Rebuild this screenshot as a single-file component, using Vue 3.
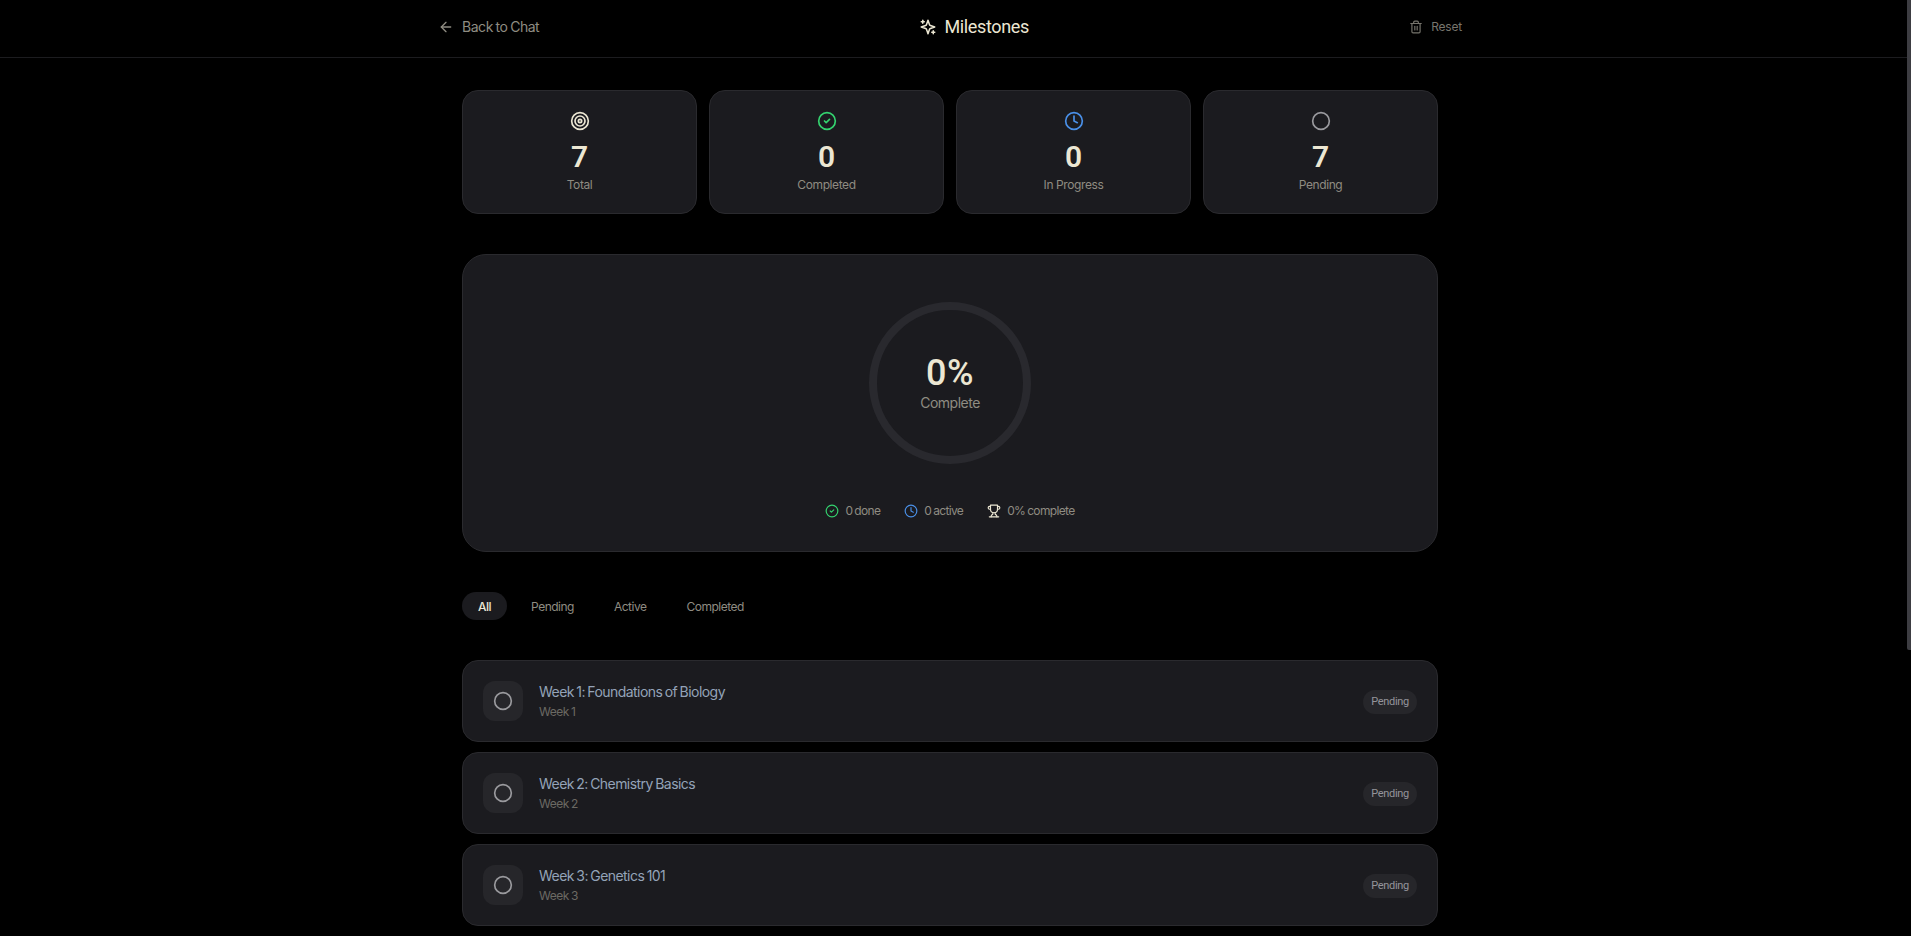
<template>
  <div class="page">
    <header class="topbar">
      <div class="topbar-inner">
        <button class="back">
          <svg class="icon-16" viewBox="0 0 24 24"><path d="m12 19-7-7 7-7" /><path d="M19 12H5" /></svg>
          <span>Back to Chat</span>
        </button>
        <h1 class="title">
          <svg class="icon-18" viewBox="0 0 24 24">
            <path d="m12 3-1.9 5.8a2 2 0 0 1-1.3 1.3L3 12l5.8 1.9a2 2 0 0 1 1.3 1.3L12 21l1.9-5.8a2 2 0 0 1 1.3-1.3L21 12l-5.8-1.9a2 2 0 0 1-1.3-1.3Z" />
            <path d="M5 3v4" /><path d="M3 5h4" /><path d="M19 17v4" /><path d="M17 19h4" />
          </svg>
          <span>Milestones</span>
        </h1>
        <button class="reset">
          <svg class="icon-14" viewBox="0 0 24 24">
            <path d="M3 6h18" /><path d="M19 6v14a2 2 0 0 1-2 2H7a2 2 0 0 1-2-2V6" />
            <path d="M8 6V4a2 2 0 0 1 2-2h4a2 2 0 0 1 2 2v2" /><path d="M10 11v6" /><path d="M14 11v6" />
          </svg>
          <span>Reset</span>
        </button>
      </div>
    </header>

    <div class="body-wrap">
      <main class="content">
        <section class="stats">
          <div v-for="s in stats" :key="s.label" class="stat">
            <svg class="stat-icon" :class="s.kind" viewBox="0 0 24 24">
              <template v-if="s.kind === 'target'">
                <circle cx="12" cy="12" r="10" /><circle cx="12" cy="12" r="6" /><circle cx="12" cy="12" r="2" />
              </template>
              <template v-else-if="s.kind === 'done'">
                <circle cx="12" cy="12" r="10" /><path d="m9 12 2 2 4-4" />
              </template>
              <template v-else-if="s.kind === 'active'">
                <circle cx="12" cy="12" r="10" /><path d="M12 6v6l4 2" />
              </template>
              <circle v-else cx="12" cy="12" r="10" />
            </svg>
            <div class="stat-value">{{ s.value }}</div>
            <div class="stat-label">{{ s.label }}</div>
          </div>
        </section>

        <section class="progress-card">
          <div class="ring">
            <svg viewBox="0 0 162 162"><circle cx="81" cy="81" r="77" /></svg>
            <div class="ring-text">
              <div class="ring-value">0%</div>
              <div class="ring-label">Complete</div>
            </div>
          </div>
          <div class="legend">
            <div class="legend-item">
              <svg class="icon-14 done" viewBox="0 0 24 24"><circle cx="12" cy="12" r="10" /><path d="m9 12 2 2 4-4" /></svg>
              <span>0 done</span>
            </div>
            <div class="legend-item">
              <svg class="icon-14 active" viewBox="0 0 24 24"><circle cx="12" cy="12" r="10" /><path d="M12 6v6l4 2" /></svg>
              <span>0 active</span>
            </div>
            <div class="legend-item">
              <svg class="icon-14 trophy" viewBox="0 0 24 24">
                <path d="M6 9H4.5a2.5 2.5 0 0 1 0-5H6" /><path d="M18 9h1.5a2.5 2.5 0 0 0 0-5H18" />
                <path d="M4 22h16" /><path d="M10 14.66V17c0 .55-.47.98-.97 1.21C7.85 18.75 7 20.24 7 22" />
                <path d="M14 14.66V17c0 .55.47.98.97 1.21C16.15 18.75 17 20.24 17 22" />
                <path d="M18 2H6v7a6 6 0 0 0 12 0V2Z" />
              </svg>
              <span>0% complete</span>
            </div>
          </div>
        </section>

        <nav class="filters">
          <button v-for="f in filters" :key="f" class="filter" :class="{ on: f === current }" @click="current = f">{{ f }}</button>
        </nav>

        <section class="list">
          <div v-for="m in milestones" :key="m.week" class="row">
            <div class="row-icon">
              <svg class="icon-20" viewBox="0 0 24 24"><circle cx="12" cy="12" r="10" /></svg>
            </div>
            <div class="row-text">
              <div class="row-title">Week {{ m.week }}: {{ m.name }}</div>
              <div class="row-sub">Week {{ m.week }}</div>
            </div>
            <span class="badge">Pending</span>
          </div>
        </section>
      </main>
    </div>

    <!-- headless browser hides the real scrollbar, so the thumb is drawn -->
    <div class="scroll-thumb"></div>
  </div>
</template>

<script setup>
import { ref } from "vue";

const stats = [
  { kind: "target", value: 7, label: "Total" },
  { kind: "done", value: 0, label: "Completed" },
  { kind: "active", value: 0, label: "In Progress" },
  { kind: "pending", value: 7, label: "Pending" },
];

const filters = ["All", "Pending", "Active", "Completed"];
const current = ref("All");

const milestones = [
  { week: 1, name: "Foundations of Biology" },
  { week: 2, name: "Chemistry Basics" },
  { week: 3, name: "Genetics 101" },
  { week: 4, name: "Cell Structure" },
  { week: 5, name: "Human Anatomy" },
  { week: 6, name: "Ecology" },
  { week: 7, name: "Final Review" },
];
</script>

<style>
html,
body {
  background: #000;
}
</style>

<style scoped>
.page {
  min-height: 100vh;
  background: #000;
  color: #ece7d3;
  font-family: Inter, "Liberation Sans", sans-serif;
}

svg {
  fill: none;
  stroke: currentColor;
  stroke-width: 2;
  stroke-linecap: round;
  stroke-linejoin: round;
  flex-shrink: 0;
}

.icon-14 { width: 14px; height: 14px; }
.icon-16 { width: 16px; height: 16px; }
.icon-18 { width: 18px; height: 18px; }
.icon-20 { width: 20px; height: 20px; }

button {
  background: none;
  border: none;
  font-family: inherit;
  cursor: pointer;
  padding: 0;
}

.scroll-thumb {
  position: fixed;
  top: 0;
  right: 0;
  width: 4px;
  height: 650px;
  background: #3d3d42;
  border-bottom-left-radius: 2px;
}

.topbar {
  border-bottom: 1px solid #1c1c1f;
  padding-right: 11px;
}

.topbar-inner {
  max-width: 1024px;
  margin: 0 auto;
  height: 57px;
  box-sizing: border-box;
  padding-bottom: 4px;
  display: flex;
  align-items: center;
  justify-content: space-between;
}

.back {
  display: flex;
  align-items: center;
  gap: 8px;
  color: #8f8c82;
  font-size: 14px;
  letter-spacing: -0.46px;
  word-spacing: -0.8px;
}

.title {
  margin: 0;
  display: flex;
  align-items: center;
  gap: 7px;
  font-family: Roboto, sans-serif;
  font-size: 18px;
  font-weight: 400;
  letter-spacing: -0.36px;
  color: #ece7d3;
}

.reset {
  display: flex;
  align-items: center;
  gap: 8px;
  color: #77756d;
  font-size: 12px;
  letter-spacing: -0.2px;
}

.body-wrap {
  padding-right: 11px;
}

.content {
  max-width: 976px;
  margin: 0 auto;
  padding: 32px 0 44px;
}

.stats {
  display: grid;
  grid-template-columns: repeat(4, 1fr);
  gap: 12px;
}

.stat {
  background: #1b1b1f;
  border: 1px solid #2a2a2e;
  border-radius: 16px;
  height: 124px;
  box-sizing: border-box;
  display: flex;
  flex-direction: column;
  align-items: center;
  padding-top: 20px;
}

.stat-icon { width: 20px; height: 20px; color: #ece7d3; }
.done { color: #34d36f; }
.active { color: #4a90e8; }
.pending { color: #9a9a9e; }
.trophy { color: #ece7d3; }

.stat-value {
  margin-top: 8px;
  font-family: Roboto, sans-serif;
  font-size: 30px;
  line-height: 36px;
  font-weight: 600;
}

.stat-label {
  margin-top: 2px;
  font-size: 12px;
  line-height: 16px;
  letter-spacing: -0.4px;
  color: #8f8c82;
}

.progress-card {
  margin-top: 40px;
  height: 298px;
  box-sizing: border-box;
  background: #1b1b1f;
  border: 1px solid #2a2a2e;
  border-radius: 24px;
  display: flex;
  flex-direction: column;
  align-items: center;
  padding-top: 47px;
}

.ring {
  position: relative;
  width: 162px;
  height: 162px;
}

.ring svg {
  width: 100%;
  height: 100%;
  stroke: #29292e;
  stroke-width: 8;
}

.ring-text {
  position: absolute;
  inset: 0;
  display: flex;
  flex-direction: column;
  align-items: center;
  justify-content: center;
}

.ring-value {
  font-family: Roboto, sans-serif;
  font-size: 36px;
  line-height: 40px;
  font-weight: 500;
  letter-spacing: 0.5px;
}

.ring-label {
  font-size: 14px;
  line-height: 20px;
  letter-spacing: -0.5px;
  color: #8f8c82;
}

.legend {
  margin-top: 39px;
  display: flex;
  gap: 24px;
  font-size: 12px;
  letter-spacing: -0.65px;
  word-spacing: -0.8px;
  color: #8f8c82;
}

.legend-item {
  display: flex;
  align-items: center;
  gap: 6px;
}

.filters {
  margin-top: 40px;
  display: flex;
  gap: 8px;
}

.filter {
  height: 28px;
  padding: 0 16px;
  border-radius: 14px;
  font-size: 12px;
  letter-spacing: -0.5px;
  color: #8f8c82;
}

.filter.on {
  background: #1b1b1f;
  color: #ece7d3;
  font-weight: 500;
}

.list {
  margin-top: 40px;
  display: flex;
  flex-direction: column;
  gap: 10px;
}

.row {
  background: #1b1b1f;
  border: 1px solid #2a2a2e;
  border-radius: 16px;
  height: 82px;
  box-sizing: border-box;
  padding: 0 20px;
  display: flex;
  align-items: center;
  gap: 16px;
}

.row-icon {
  width: 40px;
  height: 40px;
  border-radius: 12px;
  background: #26262a;
  display: flex;
  align-items: center;
  justify-content: center;
  color: #9a9a9e;
}

.row-text {
  flex: 1;
}

.row-title {
  font-size: 14px;
  line-height: 20px;
  letter-spacing: -0.55px;
  word-spacing: -1px;
  color: #94a3b8;
}

.row-sub {
  margin-top: 2px;
  font-size: 12px;
  line-height: 16px;
  letter-spacing: -0.5px;
  word-spacing: -0.6px;
  color: #6b6963;
}

.badge {
  height: 24px;
  line-height: 24px;
  margin-top: 2px;
  padding: 0 8px;
  border-radius: 12px;
  background: #26262a;
  font-family: Roboto, sans-serif;
  font-size: 11px;
  letter-spacing: -0.3px;
  color: #94949a;
}
</style>
